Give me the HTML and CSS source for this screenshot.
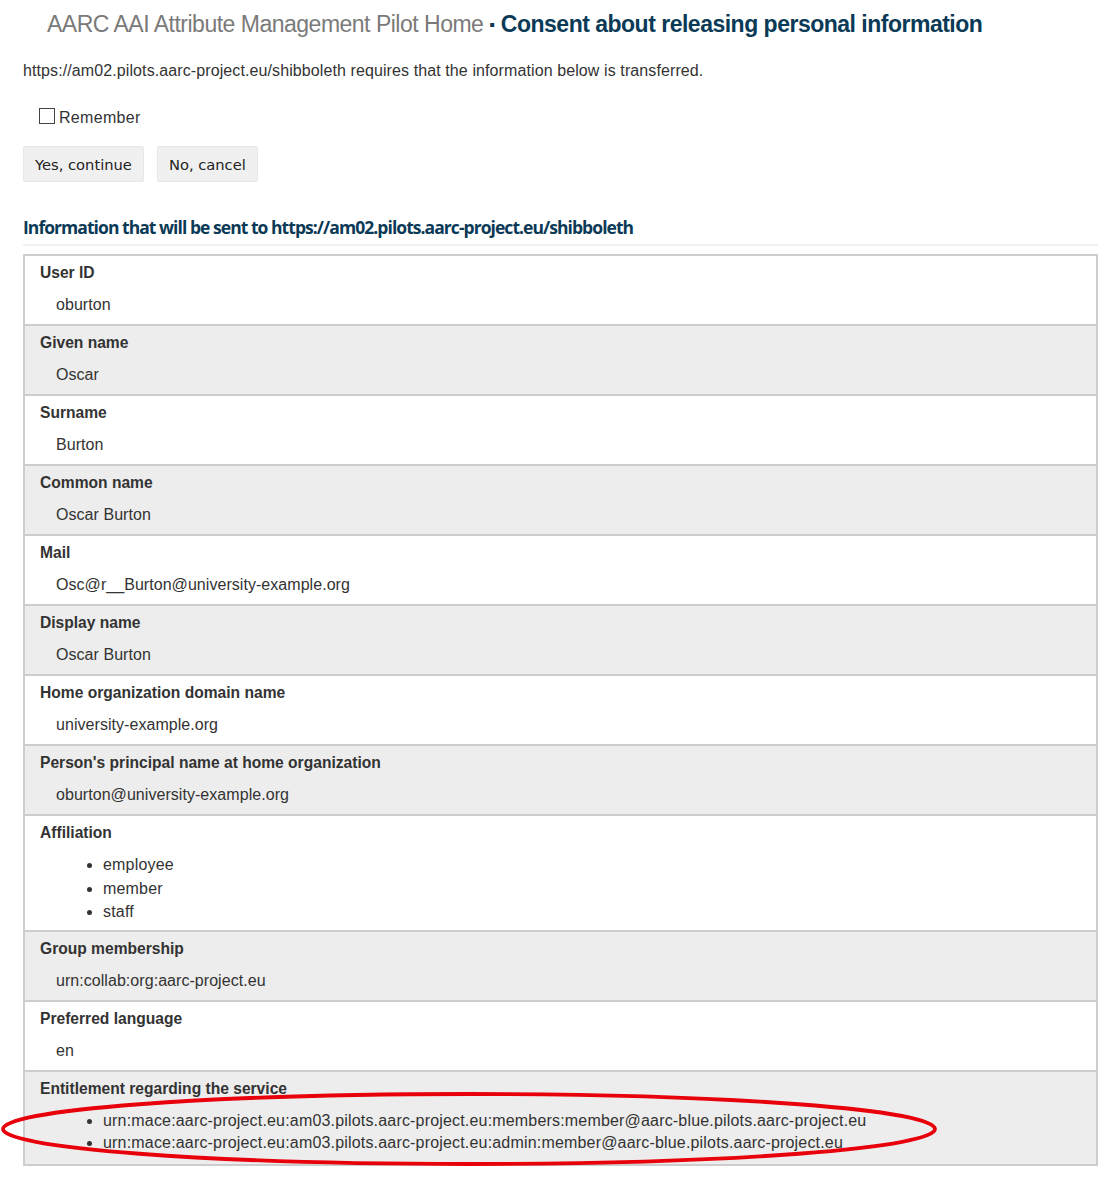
FILE: index.html
```html
<!DOCTYPE html>
<html>
<head>
<meta charset="utf-8">
<link rel="stylesheet" href="styles.css">
</head>
<body>
<div class="page">
  <h1 class="title"><span class="home">AARC AAI Attribute Management Pilot Home</span> <span class="sep">▪</span> <span class="main">Consent about releasing personal information</span></h1>
  <p class="intro">https://am02.pilots.aarc-project.eu/shibboleth requires that the information below is transferred.</p>
  <label class="remember"><span class="box"></span>Remember</label>
  <div class="buttons">
    <button class="btn">Yes, continue</button>
    <button class="btn">No, cancel</button>
  </div>
  <h2 class="info">Information that will be sent to https://am02.pilots.aarc-project.eu/shibboleth</h2>
  <div class="attrs">
    <div class="row"><div class="name">User ID</div><div class="val">oburton</div></div>
    <div class="row alt"><div class="name">Given name</div><div class="val">Oscar</div></div>
    <div class="row"><div class="name">Surname</div><div class="val">Burton</div></div>
    <div class="row alt"><div class="name">Common name</div><div class="val">Oscar Burton</div></div>
    <div class="row"><div class="name">Mail</div><div class="val">Osc@r__Burton@university-example.org</div></div>
    <div class="row alt"><div class="name">Display name</div><div class="val">Oscar Burton</div></div>
    <div class="row"><div class="name">Home organization domain name</div><div class="val">university-example.org</div></div>
    <div class="row alt"><div class="name">Person's principal name at home organization</div><div class="val">oburton@university-example.org</div></div>
    <div class="row list"><div class="name">Affiliation</div><ul class="vals"><li>employee</li><li>member</li><li>staff</li></ul></div>
    <div class="row alt"><div class="name">Group membership</div><div class="val">urn:collab:org:aarc-project.eu</div></div>
    <div class="row"><div class="name">Preferred language</div><div class="val">en</div></div>
    <div class="row alt list last"><div class="name">Entitlement regarding the service</div><ul class="vals"><li>urn:mace:aarc-project.eu:am03.pilots.aarc-project.eu:members:member@aarc-blue.pilots.aarc-project.eu</li><li>urn:mace:aarc-project.eu:am03.pilots.aarc-project.eu:admin:member@aarc-blue.pilots.aarc-project.eu</li></ul></div>
  </div>
  <svg class="ring" width="942" height="78" viewBox="0 0 942 78"><ellipse cx="469" cy="38" rx="466" ry="35" fill="none" stroke="#e8000b" stroke-width="3.8"/></svg>
</div>
</body>
</html>
```
FILE: styles.css
```css
* { box-sizing: border-box; }
body { margin: 0; background: #fff; color: #333; font-family: "Liberation Sans", Arial, sans-serif; }
.page { position: relative; padding: 0 19px 0 23px; width: 1117px; }
.title { margin: 0; padding: 9px 0 0 24px; font-size: 23px; font-weight: normal; line-height: 30px; letter-spacing: -0.5px; white-space: nowrap; }
.home { color: #7a7a7a; }
.sep { color: #0b3a57; font-size: 16px; vertical-align: 2px; letter-spacing: 0; }
.main { color: #0b3a57; font-weight: bold; }
.intro { margin: 21px 0 0; font-size: 16px; line-height: 20px; letter-spacing: 0.1px; }
.remember { display: flex; align-items: center; margin: 27px 0 0 16px; font-size: 16px; line-height: 20px; color: #333; letter-spacing: 0.3px; }
.box { width: 16px; height: 16px; border: 1.5px solid #444; margin-right: 4px; margin-top: -5px; background: #fff; }
.buttons { display: flex; gap: 13px; margin-top: 18px; }
.btn { font-family: "DejaVu Sans", sans-serif; font-size: 14.7px; color: #222; background: #f0f0f0; border: 1px solid #e8e8e8; border-radius: 2px; height: 36px; padding: 0 11px; letter-spacing: 0; }
.info { margin: 33px 0 0; padding-bottom: 5px; border-bottom: 2px solid #f0f0f0; font-family: "Open Sans", sans-serif; font-size: 17.5px; font-weight: bold; color: #0b3a57; letter-spacing: -0.95px; line-height: 24px; }
.attrs { margin-top: 8px; border: 2px solid #cdcdcd; }
.row { height: 70px; border-bottom: 2px solid #cdcdcd; padding: 7px 0 0 15px; background: #fff; }
.row.alt { background: #ededed; }
.row.last { border-bottom: none; }
.row.list { height: auto; padding-bottom: 6px; }
.row.last.list { padding-bottom: 10px; }
.name { font-size: 15.6px; font-weight: bold; line-height: 20px; color: #333; }
.val { margin: 12px 0 0 16px; font-size: 16px; line-height: 20px; color: #333; letter-spacing: 0.05px; }
.vals { margin: 10px 0 0; padding-left: 63px; font-size: 16px; line-height: 23.5px; letter-spacing: 0.18px; }
.row.last .vals { line-height: 22px; margin-top: 11px; }
.ring { position: absolute; left: 0; top: 1091px; }
```
